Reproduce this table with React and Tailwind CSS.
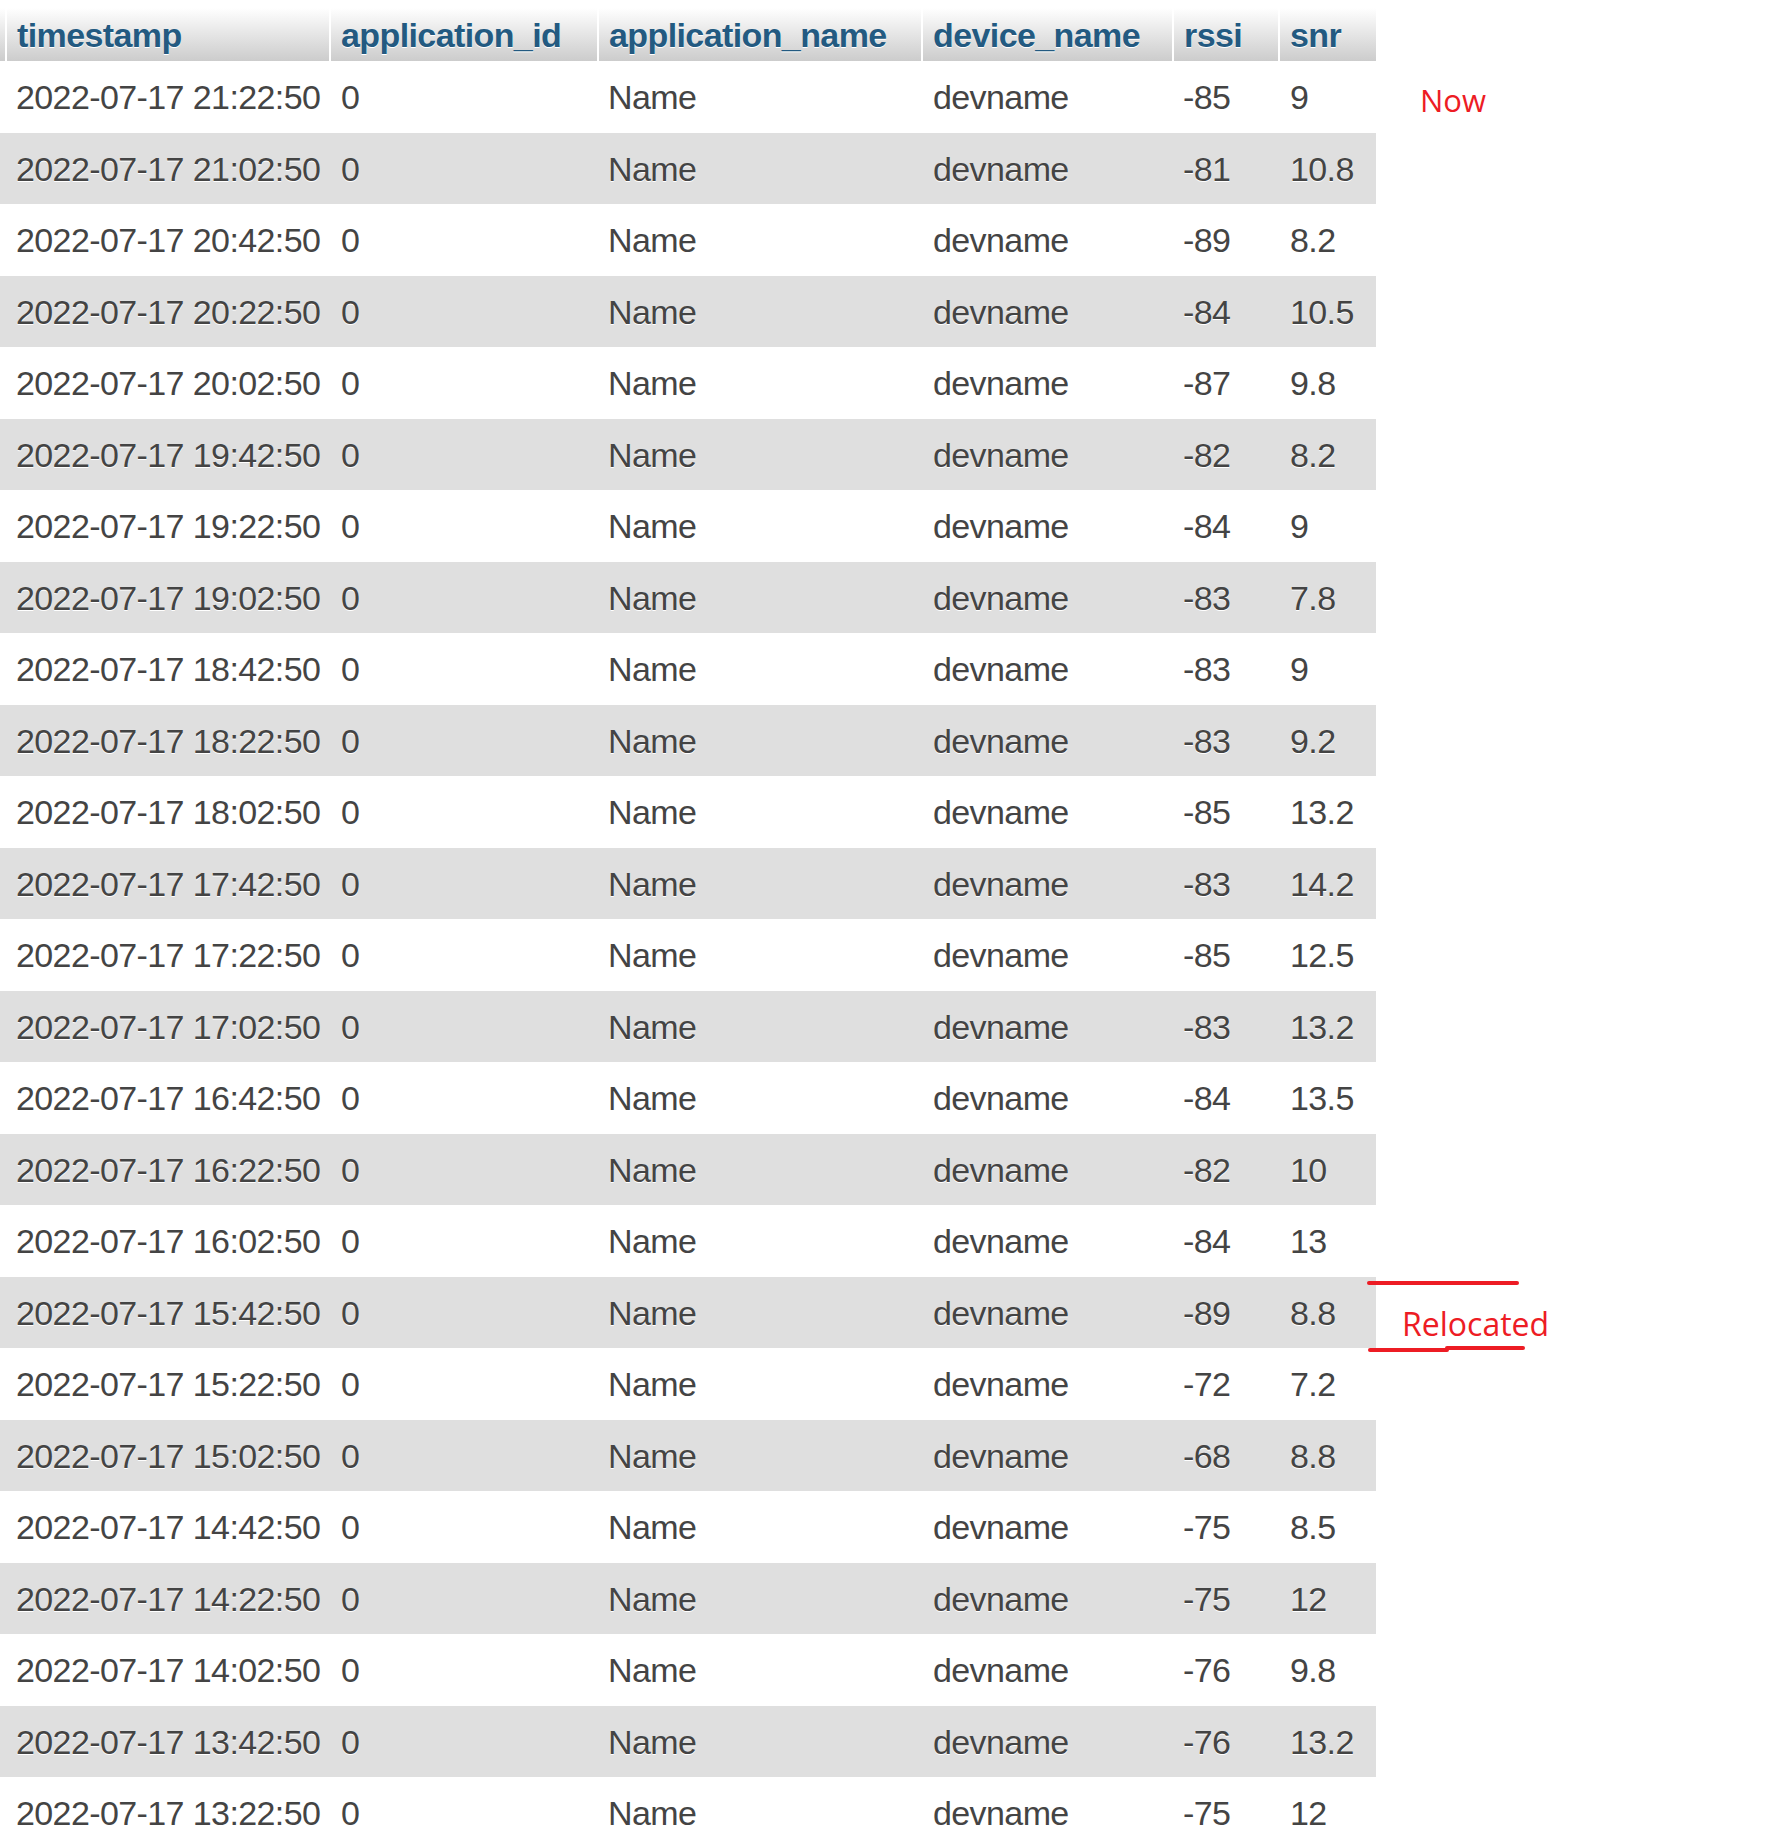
import React from "react";

const rows = [
  ["21:22:50", "-85", "9"],
  ["21:02:50", "-81", "10.8"],
  ["20:42:50", "-89", "8.2"],
  ["20:22:50", "-84", "10.5"],
  ["20:02:50", "-87", "9.8"],
  ["19:42:50", "-82", "8.2"],
  ["19:22:50", "-84", "9"],
  ["19:02:50", "-83", "7.8"],
  ["18:42:50", "-83", "9"],
  ["18:22:50", "-83", "9.2"],
  ["18:02:50", "-85", "13.2"],
  ["17:42:50", "-83", "14.2"],
  ["17:22:50", "-85", "12.5"],
  ["17:02:50", "-83", "13.2"],
  ["16:42:50", "-84", "13.5"],
  ["16:22:50", "-82", "10"],
  ["16:02:50", "-84", "13"],
  ["15:42:50", "-89", "8.8"],
  ["15:22:50", "-72", "7.2"],
  ["15:02:50", "-68", "8.8"],
  ["14:42:50", "-75", "8.5"],
  ["14:22:50", "-75", "12"],
  ["14:02:50", "-76", "9.8"],
  ["13:42:50", "-76", "13.2"],
  ["13:22:50", "-75", "12"],
];

const cols = "grid grid-cols-[5px_324px_268px_324px_251px_106px_98px] w-[1376px]";
const headers = ["timestamp", "application_id", "application_name", "device_name", "rssi", "snr"];

export default function App() {
  return (
    <div className="relative h-[1844px] w-full overflow-hidden bg-white font-['Liberation_Sans',Arial,sans-serif] text-[34px] tracking-[-0.6px]">
      <div className="pt-2">
        {/* header */}
        <div className={`${cols} h-[53px] bg-gradient-to-b from-white to-[#cccccc] font-bold text-[#235a81] [text-shadow:0_1px_0_#fff]`}>
          <div />
          {headers.map((h) => (
            <div key={h} className="flex items-center border-l-2 border-white pl-[10px] leading-none">
              {h}
            </div>
          ))}
        </div>

        {/* rows */}
        {rows.map(([time, rssi, snr], i) => (
          <div
            key={time}
            className={`${cols} items-center leading-none text-[#444444] [text-shadow:0_1px_0_#fff] ${
              i % 2 === 0 ? "h-[72px] bg-white" : "h-[71px] bg-[#dfdfdf]"
            }`}
          >
            <div />
            <div className="pl-[11px]">2022-07-17 {time}</div>
            <div className="pl-[12px]">0</div>
            <div className="pl-[11px]">Name</div>
            <div className="pl-[12px]">devname</div>
            <div className="pl-[11px]">{rssi}</div>
            <div className="pl-[12px]">{snr}</div>
          </div>
        ))}
      </div>

      {/* hand-drawn annotations */}
      <div className="absolute left-[1420px] top-[85px] font-['Open_Sans',sans-serif] text-[31px] leading-none tracking-normal text-[#ed1c24]">
        Now
      </div>
      <svg className="absolute left-[1360px] top-[1275px]" width="175" height="85" viewBox="0 0 175 85">
        <path d="M9 8 L157 8" stroke="#ed1c24" strokeWidth="4" strokeLinecap="round" fill="none" />
        <path d="M10 75 L87 75" stroke="#ed1c24" strokeWidth="4" strokeLinecap="round" fill="none" />
        <path d="M87 73 L163 73" stroke="#ed1c24" strokeWidth="4" strokeLinecap="round" fill="none" />
      </svg>
      <div className="absolute left-[1402px] top-[1308px] font-['Open_Sans',sans-serif] text-[32px] leading-none tracking-normal text-[#ed1c24]">
        Relocated
      </div>
    </div>
  );
}
